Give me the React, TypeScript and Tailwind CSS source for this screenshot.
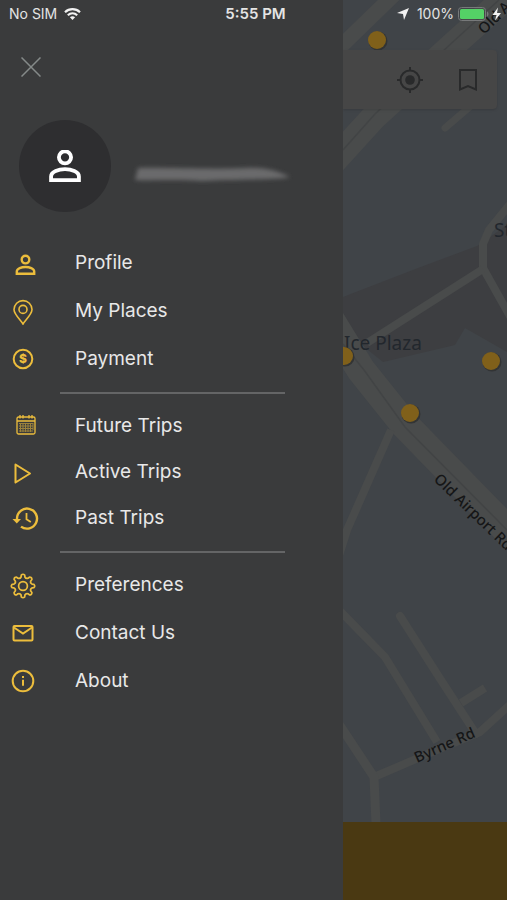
import { ReactNode } from 'react';
import { clsx } from 'clsx';

const gearPath = buildGearPath(14, 15, 8, 8.6, 11.6);

function buildGearPath(
  cx: number,
  cy: number,
  teeth: number,
  inner: number,
  outer: number
) {
  const point = (deg: number, radius: number) => {
    const rad = (deg * Math.PI) / 180;
    const x = cx + radius * Math.cos(rad);
    const y = cy + radius * Math.sin(rad);
    return `${x.toFixed(2)} ${y.toFixed(2)}`;
  };

  let path = '';

  for (let i = 0; i < teeth; i++) {
    const angle = (360 / teeth) * i - 90;
    path += i === 0 ? 'M' : 'L';
    path += point(angle - 12, inner + 0.6);
    path += `L${point(angle - 9, outer - 0.6)}`;
    path += `Q${point(angle, outer + 1)} ${point(angle + 9, outer - 0.6)}`;
    path += `L${point(angle + 12, inner + 0.6)}`;
    path += `Q${point(angle + 22.5, inner - 1)} ${point(angle + 33, inner + 0.6)}`;
  }

  return path + 'Z';
}

const PersonShape = () => (
  <g strokeWidth="2.4">
    <circle cx="16.5" cy="10.6" r="3.8" />
    <path d="M7.8 24.8V22.6C7.8 19.4 12.6 18 16.5 18S25.2 19.4 25.2 22.6V24.8Z" />
  </g>
);

const MenuIcon = ({ children }: { children: ReactNode }) => (
  <svg
    className="h-7 w-8 shrink-0 text-[#ecbd3c]"
    viewBox="0 0 32 28"
    fill="none"
    stroke="currentColor"
    strokeWidth="2"
    aria-hidden="true"
  >
    {children}
  </svg>
);

const menuGroups = [
  {
    gap: 'gap-5',
    items: [
      { label: 'Profile', icon: <PersonShape /> },
      {
        label: 'My Places',
        icon: (
          <g strokeWidth="1.6">
            <path d="M14 27C12 23.6 5 17.4 5 12.6A9 9 0 0 1 23 12.6C23 17.4 16 23.6 14 27Z" />
            <circle cx="14" cy="12.4" r="4" />
          </g>
        )
      },
      {
        label: 'Payment',
        icon: (
          <>
            <circle cx="14" cy="14" r="9.3" />
            <text
              x="14"
              y="18"
              textAnchor="middle"
              className="font-['Inter',sans-serif] text-[12px] font-extrabold"
              fill="currentColor"
              stroke="none"
            >
              $
            </text>
          </>
        )
      }
    ]
  },
  {
    gap: 'gap-[18px]',
    items: [
      {
        label: 'Future Trips',
        icon: (
          <>
            <g strokeWidth="1.3">
              <rect x="8" y="5" width="18" height="17" rx="1.5" />
              <path d="M8 9H26M11 3V6.5M14 3V6.5M20 3V6.5M23 3V6.5" />
            </g>
            <g strokeWidth="1" opacity="0.55">
              <path d="M10 11.5H24M10 14H24M10 16.5H24M10 19H24" />
              <path d="M11.5 11V20M14 11V20M16.5 11V20M19 11V20M21.5 11V20M24 11V18" />
            </g>
          </>
        )
      },
      {
        label: 'Active Trips',
        icon: <path d="M6.5 6.5L21 15.5L6.5 24.5Z" strokeLinejoin="round" />
      },
      {
        label: 'Past Trips',
        icon: (
          <>
            <path d="M8 16V14.6A10 10 0 1 1 12 22.6" strokeWidth="2.4" />
            <path d="M3.5 15H12L7.8 19.6Z" fill="currentColor" stroke="none" />
            <path d="M17.5 9V15.2L21.8 18" strokeWidth="1.8" />
          </>
        )
      }
    ]
  },
  {
    gap: 'gap-5',
    items: [
      {
        label: 'Preferences',
        icon: (
          <g strokeWidth="1.7" strokeLinejoin="round">
            <path d={gearPath} />
            <circle cx="14" cy="15" r="4.4" />
          </g>
        )
      },
      {
        label: 'Contact Us',
        icon: (
          <>
            <rect x="4.5" y="7" width="19" height="14.5" rx="1" />
            <path d="M5 8.5L14 14.5L23 8.5" />
          </>
        )
      },
      {
        label: 'About',
        icon: (
          <>
            <circle cx="14" cy="14" r="10.3" />
            <path d="M14 12.8V18.8M14 9V11" />
          </>
        )
      }
    ]
  }
];

const stops = [
  { x: 34, y: 40 },
  { x: 1, y: 356 },
  { x: 148, y: 361 },
  { x: 67, y: 413 }
];

const StatusBar = () => (
  <header className="absolute inset-x-0 top-0 z-10 flex h-7 items-center pl-[9px] pr-[5px] text-sm text-[#e4e4e4]">
    <div className="flex flex-1 items-center gap-[7px]">
      <span>No SIM</span>
      <svg className="h-3 w-[17px]" viewBox="0 0 17 12" fill="none" stroke="#f2f2f2" strokeWidth="2.2">
        <path d="M1 4.2C5.2 0.2 11.8 0.2 16 4.2" />
        <path d="M3.8 7.2C6.5 4.7 10.5 4.7 13.2 7.2" />
        <path d="M8.5 12L5.9 9.3C7.4 8 9.6 8 11.1 9.3Z" fill="#f2f2f2" stroke="none" />
      </svg>
    </div>
    <span className="text-[15px] font-semibold">5:55 PM</span>
    <div className="flex flex-1 items-center justify-end gap-1">
      <svg className="mr-1 h-3 w-3" viewBox="0 0 12 12" fill="#f2f2f2">
        <path d="M12 0L7 12L6 6L0 5Z" />
      </svg>
      <span>100%</span>
      <svg className="h-[14px] w-11" viewBox="0 0 44 14">
        <rect x="0.5" y="0.5" width="27" height="13" rx="3" fill="none" stroke="#77797a" />
        <rect x="2" y="2" width="24" height="10" rx="1.5" fill="#54d266" />
        <path d="M29 4.5C31 5 31 9 29 9.5Z" fill="#77797a" />
        <path d="M40 0.5L34.5 8H38.5L37 13.5L43 6H39Z" fill="#f2f2f2" />
      </svg>
    </div>
  </header>
);

const Drawer = () => (
  <aside className="w-[343px] shrink-0 bg-[#3a3b3c] pt-[57px]">
    <button className="ml-[21px] block size-5" type="button" aria-label="Close menu">
      <svg className="size-5" viewBox="0 0 20 20" stroke="#858a89" strokeWidth="1.5">
        <path d="M0.5 0.5L19.5 19.5M19.5 0.5L0.5 19.5" />
      </svg>
    </button>

    <div className="ml-[19px] mt-[43px] flex items-center gap-4">
      <div className="flex size-[92px] items-center justify-center rounded-full bg-[#2e2e30]">
        <svg className="size-8" viewBox="6.5 6 20 20" fill="none" stroke="#ffffff">
          <PersonShape />
        </svg>
      </div>

      {/* the account name is smudged out */}
      <svg className="mt-4 h-8 w-[172px]" viewBox="0 0 172 32">
        <defs>
          <filter id="smudge" x="-10%" y="-60%" width="120%" height="220%">
            <feGaussianBlur stdDeviation="2" />
          </filter>
        </defs>
        <path
          d="M11 10C40 9 80 12 120 10C140 9 152 14 163 19C151 22 110 21 74 23C50 21 28 23 8 22Z"
          fill="#6a6b6c"
          filter="url(#smudge)"
        />
      </svg>
    </div>

    <nav className="mt-[37px]">
      {menuGroups.map((group, index) => (
        <div key={index}>
          {index > 0 && (
            <hr className="mb-[18px] ml-[60px] mr-[58px] mt-[19px] border-t-2 border-[#646566]" />
          )}
          <ul className={clsx('flex flex-col pl-[9px]', group.gap)}>
            {group.items.map((item) => (
              <li key={item.label}>
                <a className="flex h-7 items-center gap-[34px] text-[19px] text-[#e8e8e8]" href="#">
                  <MenuIcon>{item.icon}</MenuIcon>
                  {item.label}
                </a>
              </li>
            ))}
          </ul>
        </div>
      ))}
    </nav>
  </aside>
);

const MapDrawing = () => (
  <svg
    className="absolute inset-0 h-full w-full"
    viewBox="0 0 164 822"
    preserveAspectRatio="xMinYMin slice"
    aria-hidden="true"
  >
    <rect width="164" height="822" fill="#404448" />
    <path
      d="M0 297L75 268L134 246L164 225V352L150 344L122 328L112 345L40 362L0 330Z"
      fill="#3d3e41"
    />

    <g fill="none" stroke="#494b4b" strokeWidth="8" strokeLinejoin="round">
      <path d="M-8 52L60 -14" strokeWidth="15" />
      <path d="M-12 164L30 118L110 45L176 -14" strokeWidth="26" />
      <path d="M102 128L130 104" strokeLinecap="round" strokeWidth="7" />
      <path d="M168 203L146 230L140 244L140 268L168 318" />
      <path d="M140 269L24 343" />
      <path d="M-14 318L18 370L62 425L176 542" strokeWidth="29" />
      <path d="M48 430L4 530L-6 562" />
      <path d="M-4 610L42 657L94 742" />
      <path d="M57 616L96 677L133 734" strokeLinecap="round" />
      <path d="M118 703L142 688" />
      <path d="M170 702L137 732L94 750L31 777" />
      <path d="M-4 724L31 777L33 824" strokeWidth="9" />
    </g>
    <g fill="none" stroke="#424445" strokeWidth="1.5">
      <path d="M0 150L32 114L112 40L156 0" />
      <path d="M0 344L21 370L62 427L164 530" />
    </g>

    <g className="font-['Noto_Sans',sans-serif] text-[15px] font-medium" fill="#151617">
      <text transform="translate(141 35) rotate(-44)">Old A</text>
      <text transform="translate(90 480) rotate(44)">Old Airport Rd</text>
      <text transform="translate(74 763) rotate(-24)">Byrne Rd</text>
    </g>
    <g className="font-['Noto_Sans',sans-serif] text-[19px]" fill="#22272d">
      <text x="1" y="350">Ice Plaza</text>
      <text x="151" y="237">St</text>
    </g>

    {stops.map((stop) => (
      <g key={stop.y}>
        <circle cx={stop.x + 1} cy={stop.y + 1} r="9.5" fill="#323435" />
        <circle cx={stop.x} cy={stop.y} r="9" fill="#80601a" />
      </g>
    ))}
  </svg>
);

const MapPanel = () => (
  <main className="flex min-w-0 flex-1 flex-col">
    <section className="relative flex-1 overflow-hidden pr-[10px] pt-[50px]">
      <MapDrawing />
      <div className="relative flex h-[59px] items-center justify-end gap-9 rounded-r bg-[#464646] pr-5 shadow-sm">
        <button type="button" aria-label="Current location">
          <svg className="size-[26px]" viewBox="0 0 26 26" fill="none" stroke="#292a2b" strokeWidth="2">
            <circle cx="13" cy="13" r="9.5" />
            <circle cx="13" cy="13" r="4.8" fill="#292a2b" stroke="none" />
            <path d="M13 0V4M13 22V26M0 13H4M22 13H26" />
          </svg>
        </button>
        <button type="button" aria-label="Saved places">
          <svg className="h-[22px] w-[18px]" viewBox="0 0 18 22" fill="none" stroke="#292a2b" strokeWidth="2">
            <path d="M1 1H17V20.5L9 17L1 20.5Z" />
          </svg>
        </button>
      </div>
    </section>
    <div className="h-[78px] bg-[#4a3912]" />
  </main>
);

export default function App() {
  return (
    <div className="relative flex min-h-screen bg-[#3a3b3c] font-['Inter',sans-serif]">
      <StatusBar />
      <Drawer />
      <MapPanel />
    </div>
  );
}
